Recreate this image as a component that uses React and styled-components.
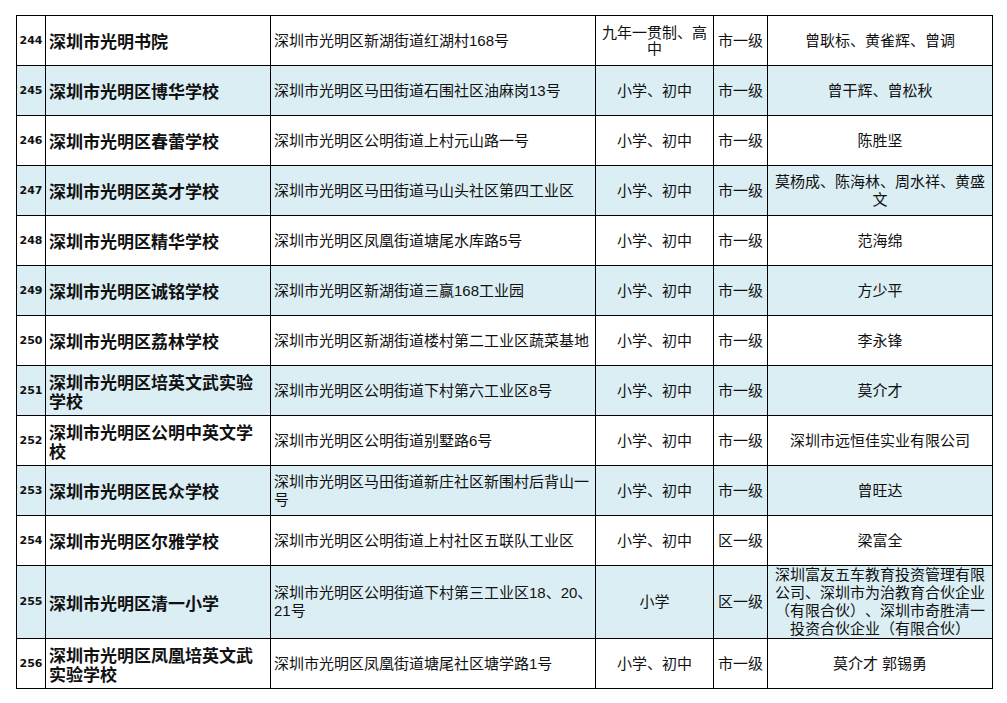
import React from 'react';
import styled, { createGlobalStyle } from 'styled-components';

const GlobalStyle = createGlobalStyle`
  html, body {
    margin: 0;
    padding: 0;
    background: #ffffff;
  }
  body {
    padding: 15px 0 0 16px;
    font-family: "Liberation Sans", "Noto Sans CJK SC", sans-serif;
    color: #111;
    text-spacing-trim: space-all;
  }
`;

const Table = styled.table`
  border-collapse: collapse;
  table-layout: fixed;
  width: 977px;
  border: 1px solid #000;
`;

const Col = styled.col`
  width: ${(p) => p.$w}px;
`;

const Row = styled.tr`
  height: 50px;
  background: ${(p) => (p.$blue ? '#dbeef4' : '#ffffff')};
`;

const Cell = styled.td`
  border: 1px solid #000;
  padding: 0 3px;
  vertical-align: middle;
  font-size: 15px;
  line-height: 18px;
  text-align: center;
  overflow: hidden;
  text-spacing-trim: space-all;
`;

const NumCell = styled(Cell)`
  padding: 0;
  font-family: "DejaVu Sans", sans-serif;
  font-weight: 700;
  font-size: 11px;
`;

const NameCell = styled(Cell)`
  padding: 0 8px 0 3px;
  font-family: "Noto Sans CJK SC", sans-serif;
  font-weight: 700;
  font-size: 17px;
  line-height: 19px;
  text-align: left;
`;

const AddressCell = styled(Cell)`
  padding: 0 0 0 3px;
  text-align: left;
`;

const TypeCell = styled(Cell)`
  line-height: ${(p) => (p.$tight ? '16px' : '18px')};
`;

const columns = [29, 225, 325, 118, 54, 225];

const rows = [
  ['244', '深圳市光明书院', '深圳市光明区新湖街道红湖村168号', '九年一贯制、高中', '市一级', '曾耿标、黄雀辉、曾调'],
  ['245', '深圳市光明区博华学校', '深圳市光明区马田街道石围社区油麻岗13号', '小学、初中', '市一级', '曾干辉、曾松秋'],
  ['246', '深圳市光明区春蕾学校', '深圳市光明区公明街道上村元山路一号', '小学、初中', '市一级', '陈胜坚'],
  ['247', '深圳市光明区英才学校', '深圳市光明区马田街道马山头社区第四工业区', '小学、初中', '市一级', '莫杨成、陈海林、周水祥、黄盛文'],
  ['248', '深圳市光明区精华学校', '深圳市光明区凤凰街道塘尾水库路5号', '小学、初中', '市一级', '范海绵'],
  ['249', '深圳市光明区诚铭学校', '深圳市光明区新湖街道三赢168工业园', '小学、初中', '市一级', '方少平'],
  ['250', '深圳市光明区荔林学校', '深圳市光明区新湖街道楼村第二工业区蔬菜基地', '小学、初中', '市一级', '李永锋'],
  ['251', '深圳市光明区培英文武实验学校', '深圳市光明区公明街道下村第六工业区8号', '小学、初中', '市一级', '莫介才'],
  ['252', '深圳市光明区公明中英文学校', '深圳市光明区公明街道别墅路6号', '小学、初中', '市一级', '深圳市远恒佳实业有限公司'],
  ['253', '深圳市光明区民众学校', '深圳市光明区马田街道新庄社区新围村后背山一号', '小学、初中', '市一级', '曾旺达'],
  ['254', '深圳市光明区尔雅学校', '深圳市光明区公明街道上村社区五联队工业区', '小学、初中', '区一级', '梁富全'],
  ['255', '深圳市光明区清一小学', '深圳市光明区公明街道下村第三工业区18、20、21号', '小学', '区一级', '深圳富友五车教育投资管理有限公司、深圳市为治教育合伙企业（有限合伙）、深圳市奇胜清一投资合伙企业（有限合伙）'],
  ['256', '深圳市光明区凤凰培英文武实验学校', '深圳市光明区凤凰街道塘尾社区塘学路1号', '小学、初中', '市一级', '莫介才 郭锡勇'],
];

export default function App() {
  return (
    <>
      <GlobalStyle />
      <Table>
        <colgroup>
          {columns.map((w, i) => (
            <Col key={i} $w={w} />
          ))}
        </colgroup>
        <tbody>
          {rows.map(([num, name, addr, type, level, sponsor], i) => (
            <Row key={num} $blue={i % 2 === 1}>
              <NumCell>{num}</NumCell>
              <NameCell>{name}</NameCell>
              <AddressCell>{addr}</AddressCell>
              <TypeCell $tight={type.length > 6}>{type}</TypeCell>
              <Cell>{level}</Cell>
              <Cell>{sponsor}</Cell>
            </Row>
          ))}
        </tbody>
      </Table>
    </>
  );
}
